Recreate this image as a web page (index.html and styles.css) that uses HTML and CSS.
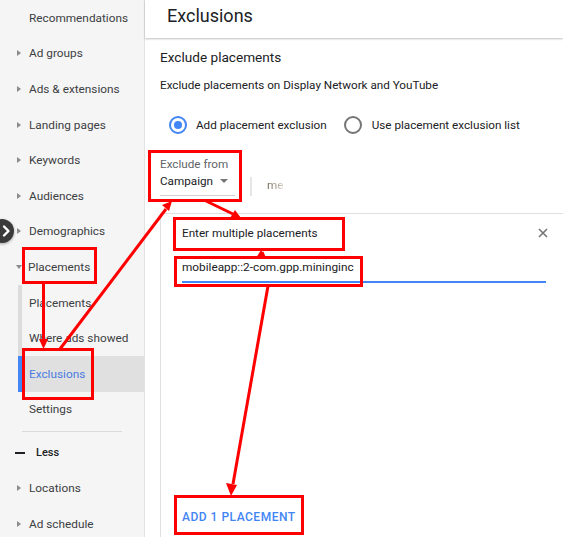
FILE: index.html
```html
<!DOCTYPE html>
<html>
<head>
<meta charset="utf-8">
<link rel="stylesheet" href="styles.css">
</head>
<body>
<div class="app">
  <nav class="sidebar">
    <div class="nav-item plain">Recommendations</div>
    <div class="nav-item"><span class="caret"></span>Ad groups</div>
    <div class="nav-item"><span class="caret"></span>Ads &amp; extensions</div>
    <div class="nav-item"><span class="caret"></span>Landing pages</div>
    <div class="nav-item"><span class="caret"></span>Keywords</div>
    <div class="nav-item"><span class="caret"></span>Audiences</div>
    <div class="nav-item"><span class="caret"></span>Demographics</div>
    <div class="nav-item"><span class="caret down"></span>Placements</div>
    <div class="nav-item sub">Placements</div>
    <div class="nav-item sub">Where ads showed</div>
    <div class="nav-item sub active">Exclusions</div>
    <div class="nav-item plain">Settings</div>
    <div class="nav-divider"><div class="line"></div></div>
    <div class="nav-item less"><span class="dash"></span>Less</div>
    <div class="nav-item"><span class="caret"></span>Locations</div>
    <div class="nav-item"><span class="caret"></span>Ad schedule</div>
    <div class="collapse-btn">
      <svg width="24" height="24" viewBox="0 0 24 24"><path d="M13 7.5 L17.5 12 L13 16.5" fill="none" stroke="#fff" stroke-width="2.4" stroke-linecap="round" stroke-linejoin="round"/></svg>
    </div>
  </nav>
  <main class="main">
    <header class="header">Exclusions</header>
    <section class="content">
      <div class="title">Exclude placements</div>
      <div class="desc">Exclude placements on Display Network and YouTube</div>
      <div class="radio-row">
        <span class="radio checked"><span class="dot"></span></span>
        <span class="radio-label">Add placement exclusion</span>
        <span class="radio"></span>
        <span class="radio-label">Use placement exclusion list</span>
      </div>
      <div class="from-row">
        <div class="select">
          <div class="select-label">Exclude from</div>
          <div class="select-value">Campaign<span class="drop"></span></div>
        </div>
        <div class="vsep"></div>
        <div class="faded">me</div>
      </div>
      <div class="panel">
        <div class="panel-head">
          <span>Enter multiple placements</span>
          <svg class="close" width="10" height="10" viewBox="0 0 10 10"><path d="M1 1 L9 9 M9 1 L1 9" stroke="#757575" stroke-width="1.6"/></svg>
        </div>
        <div class="input">mobileapp::2-com.gpp.mininginc</div>
        <div class="add-btn">ADD 1 PLACEMENT</div>
      </div>
    </section>
  </main>
  <svg class="annot" width="563" height="537" viewBox="0 0 563 537">
    <g fill="none" stroke="#f00" stroke-width="3">
      <rect x="149.5" y="151.5" width="91" height="49"/>
      <rect x="174.5" y="218.5" width="169" height="31"/>
      <rect x="175.5" y="257.5" width="186" height="28"/>
      <rect x="175.5" y="496.5" width="127" height="37"/>
      <rect x="23.5" y="248.5" width="72" height="34"/>
      <rect x="23.5" y="349.5" width="69" height="49"/>
      <line x1="43.5" y1="283" x2="43.5" y2="340"/>
      <line x1="60" y1="349" x2="166" y2="209"/>
      <line x1="206" y1="201" x2="233" y2="214"/>
      <line x1="264" y1="257" x2="262" y2="252"/>
      <line x1="268" y1="286" x2="233" y2="484"/>
    </g>
    <g fill="#f00">
      <polygon points="43.5,349 39,339 48,339"/>
      <polygon points="172,201 162,205 169,211"/>
      <polygon points="241,218 230,218 235,210"/>
      <polygon points="261,250 256,258 266,258"/>
      <polygon points="231,496 226,483 237,485"/>
    </g>
  </svg>
</div>
</body>
</html>
```
FILE: styles.css
```css
* { box-sizing: border-box; }
html, body { margin: 0; padding: 0; }
body {
  font-family: Roboto, "Noto Sans", Arial, sans-serif;
  color: #3c4043;
  background: #fff;
}
.app {
  position: relative;
  display: flex;
  width: 563px;
  height: 537px;
  overflow: hidden;
}
.sidebar {
  position: relative;
  width: 145px;
  flex: none;
  background: #f5f5f5;
  border-right: 1px solid #e3e3e3;
}
.nav-item {
  height: 35.6px;
  display: flex;
  align-items: center;
  padding-left: 17px;
  font-size: 11.8px;
  color: #3c4043;
  white-space: nowrap;
}
.nav-item.plain { padding-left: 29px; }
.caret {
  width: 0;
  height: 0;
  border-top: 3.5px solid transparent;
  border-bottom: 3.5px solid transparent;
  border-left: 4px solid #8a8a8a;
  margin-right: 8px;
}
.caret.down {
  border-left: 3.5px solid transparent;
  border-right: 3.5px solid transparent;
  border-top: 4px solid #8a8a8a;
  border-bottom: 0;
  margin-left: -1px;
  margin-right: 6px;
}
.nav-item.sub {
  margin-left: 18px;
  padding-left: 7px;
  border-left: 4px solid #dcdcdc;
}
.nav-item.sub.active {
  background: #e0e0e0;
  border-left-color: #4285f4;
  color: #4a7be0;
}
.nav-divider {
  height: 7.8px;
  display: flex;
  align-items: center;
  padding: 0 22px;
}
.nav-divider .line {
  height: 1px;
  width: 100px;
  background: #dadada;
}
.nav-item.less {
  padding-left: 15px;
  font-size: 11px;
  font-weight: 500;
  color: #202124;
}
.dash {
  width: 10px;
  height: 2px;
  background: #202124;
  margin-right: 11px;
}
.collapse-btn {
  position: absolute;
  left: -10px;
  top: 219px;
  width: 24px;
  height: 24px;
  border-radius: 50%;
  background: #3a3a3a;
  box-shadow: 0 1px 3px rgba(0,0,0,0.35);
}
.collapse-btn svg { display: block; margin-left: 1px; }
.main {
  flex: 1;
  display: flex;
  flex-direction: column;
  min-width: 0;
}
.header {
  height: 38px;
  flex: none;
  padding-left: 22px;
  line-height: 31px;
  font-size: 18px;
  color: #202124;
  box-shadow: 0 1px 2px rgba(0,0,0,0.25);
  position: relative;
  z-index: 1;
}
.content {
  flex: 1;
  display: flex;
  flex-direction: column;
  padding-left: 15px;
}
.title {
  margin-top: 9px;
  font-size: 13.6px;
  line-height: 20px;
  color: #202124;
}
.desc {
  margin-top: 10px;
  font-size: 11.7px;
  line-height: 16px;
  color: #202124;
}
.radio-row {
  margin-top: 22px;
  height: 20px;
  display: flex;
  align-items: center;
  font-size: 11.7px;
  color: #202124;
}
.radio {
  width: 18px;
  height: 18px;
  border-radius: 50%;
  border: 2px solid #757575;
  display: flex;
  align-items: center;
  justify-content: center;
  flex: none;
}
.radio.checked {
  border-color: #4285f4;
  margin-left: 9px;
}
.radio .dot {
  width: 8px;
  height: 8px;
  border-radius: 50%;
  background: #4285f4;
}
.radio-label { margin-left: 9px; margin-right: 17px; }
.radio-row .radio-label:last-child { margin-left: 10px; }
.from-row {
  margin-top: 21px;
  display: flex;
  align-items: flex-end;
}
.select {
  width: 75px;
  border-bottom: 1px solid #d0d0d0;
  padding-bottom: 5px;
}
.select-label {
  font-size: 11.7px;
  line-height: 16px;
  color: #5f6368;
}
.select-value {
  font-size: 11.7px;
  line-height: 18px;
  color: #202124;
  display: flex;
  align-items: center;
}
.drop {
  width: 0;
  height: 0;
  border-left: 4.5px solid transparent;
  border-right: 4.5px solid transparent;
  border-top: 4.5px solid #757575;
  margin-left: 7px;
}
.vsep {
  width: 2px;
  height: 19px;
  background: #e6e6e6;
  margin-left: 15px;
}
.faded {
  margin-left: 15px;
  margin-bottom: 3px;
  font-size: 11.7px;
  line-height: 16px;
  color: #8c7f6c;
  background: linear-gradient(to right, #6f6353 0%, #9d9282 50%, #d8d2c8 100%);
  -webkit-background-clip: text;
  background-clip: text;
  -webkit-text-fill-color: transparent;
}
.panel {
  margin-top: 17px;
  flex: 1;
  border-top: 1px solid #e0e0e0;
  border-left: 1px solid #e0e0e0;
  padding: 11px 17px 0 21px;
  display: flex;
  flex-direction: column;
}
.panel-head {
  display: flex;
  align-items: center;
  justify-content: space-between;
  font-size: 11.7px;
  line-height: 16px;
  color: #202124;
}
.close { margin-right: -2px; }
.input {
  margin-top: 18px;
  font-size: 11.8px;
  line-height: 16px;
  color: #202124;
  padding-bottom: 6px;
  border-bottom: 2px solid #4285f4;
}
.add-btn {
  margin-top: 226px;
  font-size: 12px;
  line-height: 16px;
  font-weight: 500;
  color: #4285f4;
  letter-spacing: 0.5px;
}
.annot {
  position: absolute;
  left: 0;
  top: 0;
  pointer-events: none;
  z-index: 5;
}
```
